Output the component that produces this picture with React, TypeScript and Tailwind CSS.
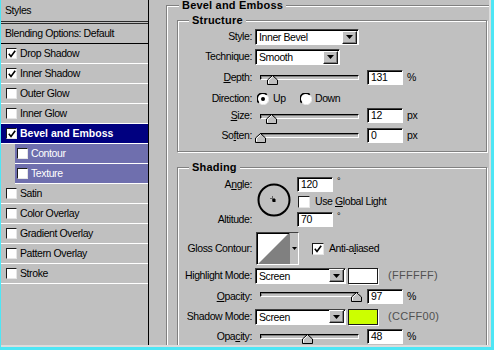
import React from "react";

const F = "font-['Liberation_Sans',Arial,Helvetica,sans-serif]";

function Check({ checked = false, size = 11 }: { checked?: boolean; size?: number }) {
  return (
    <span
      className={`flex shrink-0 items-center justify-center border border-t-[#1a1a1a] border-l-[#1a1a1a] border-r-[#e6e6e6] border-b-[#e6e6e6] bg-white ${
        size === 12 ? "h-[12px] w-[12px]" : "h-[11px] w-[11px]"
      }`}
    >
      {checked && (
        <svg width="8" height="8" viewBox="0 0 8 8">
          <path d="M0.8 3.8 L3 6.4 L7.2 0.8" fill="none" stroke="#000" strokeWidth="1.6" />
        </svg>
      )}
    </span>
  );
}

function Radio({ checked = false }: { checked?: boolean }) {
  return (
    <svg width="12" height="12" viewBox="0 0 12 12" className="shrink-0">
      <circle cx="6" cy="6" r="5.5" fill="#fff" />
      <path d="M1.8 9.8 A5.2 5.2 0 0 1 9.8 1.8" fill="none" stroke="#000" strokeWidth="1.6" />
      <path d="M10.2 2.6 A5.2 5.2 0 0 1 2.6 10.2" fill="none" stroke="#e8e8e8" strokeWidth="1" />
      {checked && <circle cx="6" cy="6" r="2" fill="#000" />}
    </svg>
  );
}

function ArrowBtn() {
  return (
    <span className="flex h-[13px] w-[15px] shrink-0 items-center justify-center border border-t-white border-l-white border-r-[#1a1a1a] border-b-[#1a1a1a] bg-[#c0c0c0] shadow-[inset_-1px_-1px_0_#808080]">
      <svg width="7" height="4" viewBox="0 0 7 4">
        <path d="M0 0 H7 L3.5 4 Z" fill="#000" />
      </svg>
    </span>
  );
}

function Dropdown({ text, w }: { text: string; w: string }) {
  return (
    <div
      className={`flex h-[16px] ${w} items-center border border-t-[#404040] border-l-[#404040] border-r-white border-b-white bg-white shadow-[inset_1px_1px_0_#000]`}
    >
      <span className="flex-1 pl-[3px] leading-[14px]">{text}</span>
      <span className="mr-[1px]">
        <ArrowBtn />
      </span>
    </div>
  );
}

function Input({ value }: { value: string }) {
  return (
    <div className="h-[15px] w-[36px] border border-t-[#404040] border-l-[#404040] border-r-white border-b-white bg-white pl-[3px] leading-[13px] shadow-[inset_1px_1px_0_#000]">
      {value}
    </div>
  );
}

function Slider({ thumb, top }: { thumb: number; top: string }) {
  // thumb: x centre in page coords; slider box begins at x=255, track at x=260
  return (
    <div className={`relative h-[10px] w-[104px] shrink-0 ${top}`}>
      <div className="ml-[5px] h-[5px] w-[99px] border border-t-[#000] border-l-[#000] border-r-white border-b-white bg-[#c0c0c0] shadow-[inset_1px_1px_0_#808080]" />
      <svg
        width="11"
        height="10"
        viewBox="0 0 11 10"
        className="absolute top-0"
        style={{ left: thumb - 255 - 5 }}
      >
        <path d="M5.5 0.5 L10.5 5 V9.5 H0.5 V5 Z" fill="#c0c0c0" stroke="#000" strokeWidth="1" />
        <path d="M1.5 8.5 V5.4 L5.5 1.8" fill="none" stroke="#fff" strokeWidth="1" />
      </svg>
    </div>
  );
}

function Label({ children }: { children: React.ReactNode }) {
  return <div className="w-[74px] shrink-0 text-right">{children}</div>;
}

const U = ({ children }: { children: React.ReactNode }) => <span className="underline underline-offset-[1px]">{children}</span>;

const styleRows: { label: string; checked?: boolean; selected?: boolean; sub?: boolean }[] = [
  { label: "Drop Shadow", checked: true },
  { label: "Inner Shadow", checked: true },
  { label: "Outer Glow" },
  { label: "Inner Glow" },
  { label: "Bevel and Emboss", checked: true, selected: true },
  { label: "Contour", sub: true },
  { label: "Texture", sub: true },
  { label: "Satin" },
  { label: "Color Overlay" },
  { label: "Gradient Overlay" },
  { label: "Pattern Overlay" },
  { label: "Stroke" },
];

function LeftPanel() {
  return (
    <div className="flex h-full w-[148px] shrink-0 flex-col border-r border-black">
      <div className="flex h-[21px] items-center pl-[4px]">Styles</div>
      <div className="h-[3px] border-y border-[#2a2a2a]" />
      <div className="flex h-[20px] items-center border-b border-black pl-[4px]">Blending Options: Default</div>
      {styleRows.map((r) =>
        r.sub ? (
          <div key={r.label} className="h-[20px] pl-[14px]">
            <div className="flex h-[20px] items-center gap-[3px] border-b border-white bg-[#6f6fae] pl-[2px] text-white">
              <Check checked={r.checked} />
              <span>{r.label}</span>
            </div>
          </div>
        ) : (
          <div
            key={r.label}
            className={`flex h-[20px] items-center gap-[3px] border-b border-white pl-[5px] ${
              r.selected ? "bg-[#000080] font-bold tracking-[0px] text-white" : ""
            }`}
          >
            <Check checked={r.checked} />
            <span>{r.label}</span>
          </div>
        )
      )}
    </div>
  );
}

const box =
  "border border-[#808080] shadow-[inset_1px_1px_0_#fff,1px_1px_0_#fff]";
const legend = "bg-[#c0c0c0] px-[3px] text-[11px] font-bold leading-[11px] tracking-[0.2px]";

function RightPanel() {
  return (
    <div className="h-full flex-1 overflow-hidden">
      <fieldset className={`ml-[17px] w-[360px] pb-[20px] ${box}`}>
        <legend className={`ml-[12px] ${legend}`}>Bevel and Emboss</legend>

        {/* Structure */}
        <fieldset className={`ml-[10px] mt-[4px] w-[310px] pb-[7px] pt-[3px] ${box}`}>
          <legend className={`ml-[11px] ${legend}`}>Structure</legend>
          <div className="flex h-[16px] items-center">
            <Label>Style:</Label>
            <div className="ml-[3px]">
              <Dropdown text="Inner Bevel" w="w-[104px]" />
            </div>
          </div>
          <div className="mt-[4px] flex h-[16px] items-center">
            <Label>Technique:</Label>
            <div className="ml-[3px]">
              <Dropdown text="Smooth" w="w-[85px]" />
            </div>
          </div>
          <div className="mt-[5px] flex h-[16px] items-center">
            <Label>
              <U>D</U>epth:
            </Label>
            <div className="ml-[3px] flex h-[16px] items-start">
              <Slider thumb={272} top="mt-[5px]" />
              <div className="ml-[8px]">
                <Input value="131" />
              </div>
              <span className="ml-[4px] leading-[15px]">%</span>
            </div>
          </div>
          <div className="mt-[5px] flex h-[16px] items-center">
            <Label>Direction:</Label>
            <div className="ml-[5px] flex w-[43px] items-center gap-[4px]">
              <Radio checked />
              <span>Up</span>
            </div>
            <div className="flex items-center gap-[3px]">
              <Radio />
              <span>Down</span>
            </div>
          </div>
          <div className="mt-[1px] flex h-[16px] items-center">
            <Label>
              <U>S</U>ize:
            </Label>
            <div className="ml-[3px] flex h-[16px] items-start">
              <Slider thumb={271} top="mt-[6px]" />
              <div className="ml-[8px]">
                <Input value="12" />
              </div>
              <span className="ml-[4px] leading-[15px]">px</span>
            </div>
          </div>
          <div className="mt-[4px] flex h-[16px] items-center">
            <Label>
              So<U>f</U>ten:
            </Label>
            <div className="ml-[3px] flex h-[16px] items-start">
              <Slider thumb={260} top="mt-[5px]" />
              <div className="ml-[8px]">
                <Input value="0" />
              </div>
              <span className="ml-[4px] leading-[15px]">px</span>
            </div>
          </div>
        </fieldset>

        {/* Shading */}
        <fieldset className={`ml-[10px] mt-[10px] w-[310px] pb-[30px] pt-[4px] ${box}`}>
          <legend className={`ml-[11px] ${legend}`}>Shading</legend>
          <div className="flex">
            <div className="flex w-[74px] shrink-0 flex-col text-right">
              <div className="h-[15px] leading-[15px]">
                A<U>n</U>gle:
              </div>
              <div className="mt-[20px] h-[15px] leading-[15px]">Altitude:</div>
            </div>
            <svg width="34" height="34" viewBox="0 0 34 34" className="ml-[5px] mt-[6px] shrink-0">
              <circle cx="17" cy="17" r="15.5" fill="none" stroke="#000" strokeWidth="2" />
              <path d="M13 15.5 H18 M15.5 13 V18" stroke="#606060" strokeWidth="1" />
              <rect x="15.5" y="16" width="3" height="3" fill="#000" />
            </svg>
            <div className="ml-[6px] flex flex-col">
              <div className="flex h-[15px] items-start">
                <Input value="120" />
                <span className="ml-[4px] text-[9px] leading-[9px]">°</span>
              </div>
              <div className="mt-[3px] flex h-[13px] items-center gap-[5px] pl-[1px]">
                <Check size={12} />
                <span>
                  Use <U>G</U>lobal Light
                </span>
              </div>
              <div className="mt-[4px] flex h-[15px] items-start">
                <Input value="70" />
                <span className="ml-[4px] text-[9px] leading-[9px]">°</span>
              </div>
            </div>
          </div>

          <div className="mt-[5px] flex h-[33px] items-center">
            <Label>Gloss Contour:</Label>
            <div className="ml-[4px] flex h-[33px] border border-t-[#404040] border-l-[#404040] border-r-white border-b-white bg-[#c0c0c0]">
              <svg width="32" height="31" viewBox="0 0 32 31" className="shrink-0">
                <rect x="0" y="0" width="32" height="31" fill="#fff" />
                <path d="M1 31 L32 0 V31 Z" fill="#808080" />
                <path d="M0 0.5 H32 M0.5 0 V31" stroke="#000" strokeWidth="1" />
              </svg>
              <div className="flex w-[9px] items-center justify-center border-l border-[#808080]">
                <svg width="5" height="3" viewBox="0 0 5 3">
                  <path d="M0 0 H5 L2.5 3 Z" fill="#000" />
                </svg>
              </div>
            </div>
            <div className="ml-[13px] flex items-center gap-[5px]">
              <Check checked size={12} />
              <span>
                Anti-a<U>l</U>iased
              </span>
            </div>
          </div>

          <div className="mt-[2px] flex h-[17px] items-center">
            <Label>Highlight Mode:</Label>
            <div className="ml-[3px]">
              <Dropdown text="Screen" w="w-[91px]" />
            </div>
            <div className="ml-[2px] h-[16px] w-[30px] border border-[#1a1a1a] bg-white shadow-[1px_1px_0_#fff]" />
            <span className="ml-[10px] text-[11px] tracking-[0.3px] text-[#505050]">(FFFFFF)</span>
          </div>
          <div className="mt-[5px] flex h-[15px] items-center">
            <Label>
              <U>O</U>pacity:
            </Label>
            <div className="ml-[3px] flex h-[15px] items-start">
              <Slider thumb={356} top="mt-[3px]" />
              <div className="ml-[8px]">
                <Input value="97" />
              </div>
              <span className="ml-[4px] leading-[15px]">%</span>
            </div>
          </div>
          <div className="mt-[4px] flex h-[17px] items-center">
            <Label>Shadow Mode:</Label>
            <div className="ml-[3px]">
              <Dropdown text="Screen" w="w-[91px]" />
            </div>
            <div className="ml-[2px] h-[16px] w-[30px] border border-[#1a1a1a] bg-[#ccff00] shadow-[1px_1px_0_#fff]" />
            <span className="ml-[10px] text-[11px] tracking-[0.3px] text-[#505050]">(CCFF00)</span>
          </div>
          <div className="mt-[4px] flex h-[15px] items-center">
            <Label>
              Opa<U>c</U>ity:
            </Label>
            <div className="ml-[3px] flex h-[15px] items-start">
              <Slider thumb={307} top="mt-[5px]" />
              <div className="ml-[8px]">
                <Input value="48" />
              </div>
              <span className="ml-[4px] leading-[15px]">%</span>
            </div>
          </div>
        </fieldset>
      </fieldset>
    </div>
  );
}

export default function App() {
  return (
    <div className={`${F} h-[350px] w-[494px] overflow-hidden bg-[#4ee6f5] text-[10.5px] tracking-[-0.4px] text-black`}>
      <div className="ml-[1px] mr-[3px] h-[347px] bg-[#dcdcdc] pb-[2px] pr-[2px]">
        <div className="flex h-[345px] overflow-hidden bg-[#c0c0c0]">
          <LeftPanel />
          <RightPanel />
        </div>
      </div>
    </div>
  );
}
